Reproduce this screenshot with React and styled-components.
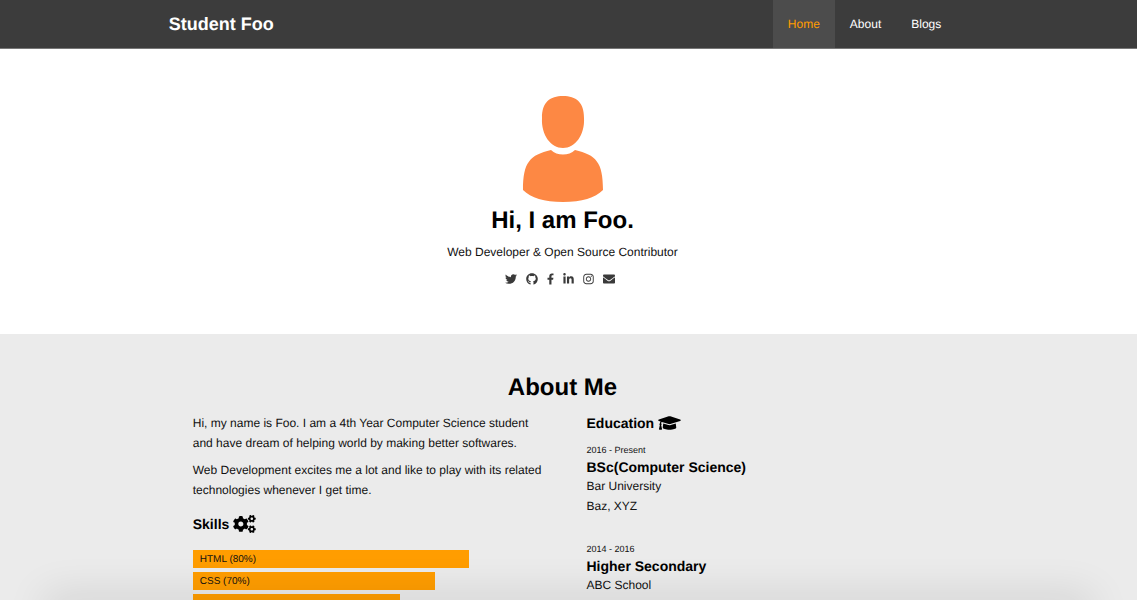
import React from "react";
import styled, { createGlobalStyle } from "styled-components";
import {
  FaTwitter,
  FaGithub,
  FaFacebookF,
  FaLinkedinIn,
  FaInstagram,
  FaEnvelope,
  FaCogs,
  FaGraduationCap,
} from "react-icons/fa";

const GlobalStyle = createGlobalStyle`
  *, *::before, *::after { box-sizing: border-box; }
  html { scrollbar-width: none; }
  body {
    margin: 0;
    background: #ebebeb;
    color: #111;
    font-family: Helvetica, "Liberation Sans", Arial, sans-serif;
    font-size: 12px;
    line-height: 20px;
    text-rendering: geometricPrecision;
  }
  h1, h2, h3, h4, p, ul { margin: 0; padding: 0; }
  ul { list-style: none; }
  a { color: inherit; text-decoration: none; }
`;

const Band = styled.div`
  padding-right: 12px;
  background: ${({ $background }) => $background};
`;

const Container = styled.div`
  width: 70%;
  margin: 0 auto;
`;

const Navbar = styled(Container)`
  display: flex;
  align-items: stretch;
  justify-content: space-between;
  height: 48px;
`;

const Header = styled(Band).attrs({ as: "header" })`
  border-bottom: 1px solid #777;
`;

const Brand = styled.a`
  && { color: #fff; }
  font-size: 18px;
  font-weight: bold;
  line-height: 48px;
`;

const NavList = styled.ul`
  display: flex;
`;

const NavLink = styled.a`
  display: block;
  padding: 0 15px;
  line-height: 48px;
  && { color: ${({ $active }) => ($active ? "#ff9d00" : "#fff")}; }
  background: ${({ $active }) => ($active ? "#4c4c4c" : "transparent")};
`;

const Hero = styled(Container)`
  display: flex;
  flex-direction: column;
  align-items: center;
  padding: 46px 0;
  text-align: center;
`;

const Avatar = styled.svg`
  display: block;
  width: 82px;
  height: 108px;
  margin-bottom: 2px;
  fill: #fd8844;
`;

const Title = styled.h1`
  color: #000;
  font-size: 24px;
  line-height: 32px;
`;

const Tagline = styled.p`
  margin-top: 5px;
`;

const SocialList = styled.ul`
  display: flex;
  justify-content: center;
  gap: 9px;
  margin: 11px 5px 0 0;
`;

const SocialLink = styled.a`
  display: block;
  height: 15px;
  && { color: #3a3a3a; }

  svg {
    display: block;
    width: ${({ $width }) => $width}px;
    height: 12px;
  }
`;

const About = styled(Container)`
  padding: 38px 0 48px;
`;

const AboutTitle = styled(Title).attrs({ as: "h2" })`
  text-align: center;
`;

const Columns = styled.div`
  display: grid;
  grid-template-columns: 1fr 1fr;
  margin-top: 9px;
`;

const Column = styled.div`
  padding: 0 16px 0 24px;
`;

const Paragraph = styled.p`
  margin-bottom: 7px;
`;

const Heading = styled.h3`
  display: flex;
  align-items: center;
  gap: 4px;
  color: #000;
  font-size: 14px;
  line-height: 20px;
  margin-top: ${({ $spaced }) => ($spaced ? "14px" : "0")};

  svg {
    width: 23px;
    height: 18px;
  }
`;

const SkillList = styled.ul`
  display: grid;
  gap: 4px;
  margin: 16px 8px 0 0;
`;

const Skill = styled.li`
  width: ${({ $level }) => $level}%;
  height: 18px;
  padding: 0 7px;
  background: #ff9d00;
  font-size: 10px;
  line-height: 20px;
`;

const School = styled.article`
  margin-top: ${({ $first }) => ($first ? "10px" : "26px")};
`;

const Period = styled.p`
  font-size: 9px;
  line-height: 15px;
`;

const Degree = styled.h4`
  color: #000;
  font-size: 14px;
  line-height: 18px;
`;

const BottomShade = styled.div`
  position: fixed;
  right: 50px;
  bottom: -20px;
  left: 50px;
  height: 20px;
  box-shadow: 0 0 40px 6px rgba(0, 0, 0, 0.11);
  pointer-events: none;
`;

const navItems = ["Home", "About", "Blogs"];

const socials = [
  { name: "Twitter", Icon: FaTwitter, width: 12 },
  { name: "GitHub", Icon: FaGithub, width: 12 },
  { name: "Facebook", Icon: FaFacebookF, width: 7 },
  { name: "LinkedIn", Icon: FaLinkedinIn, width: 11 },
  { name: "Instagram", Icon: FaInstagram, width: 11 },
  { name: "Email", Icon: FaEnvelope, width: 12 },
];

const skills = [
  { label: "HTML (80%)", level: 80 },
  { label: "CSS (70%)", level: 70 },
  { label: "", level: 60 },
];

const schools = [
  {
    period: "2016 - Present",
    degree: "BSc(Computer Science)",
    lines: ["Bar University", "Baz, XYZ"],
  },
  {
    period: "2014 - 2016",
    degree: "Higher Secondary",
    lines: ["ABC School"],
  },
];

export default function App() {
  return (
    <>
      <GlobalStyle />
      <Header $background="#3c3c3c">
        <Navbar>
          <Brand href="#home">Student Foo</Brand>
          <nav>
            <NavList>
              {navItems.map((item, i) => (
                <li key={item}>
                  <NavLink href={`#${item.toLowerCase()}`} $active={i === 0}>
                    {item}
                  </NavLink>
                </li>
              ))}
            </NavList>
          </nav>
        </Navbar>
      </Header>
      <main>
        <Band $background="#fff" id="home">
          <Hero>
            <Avatar viewBox="0 0 82 108" aria-hidden="true">
              <path d="M41 1C54 1 62 7 62 23C63 40 53 53 41 53C29 53 19 40 20 23C20 7 28 1 41 1Z" />
              <path d="M29 55C35 61 47 61 53 55C74 60 81 67 81 95C73 103 60 107 41 107C22 107 9 103 1 95C1 67 8 60 29 55Z" />
            </Avatar>
            <Title>Hi, I am Foo.</Title>
            <Tagline>Web Developer &amp; Open Source Contributor</Tagline>
            <SocialList>
              {socials.map(({ name, Icon, width }) => (
                <li key={name}>
                  <SocialLink
                    href={`#${name.toLowerCase()}`}
                    aria-label={name}
                    $width={width}
                  >
                    <Icon />
                  </SocialLink>
                </li>
              ))}
            </SocialList>
          </Hero>
        </Band>
        <Band $background="#ebebeb" id="about">
          <About>
            <AboutTitle>About Me</AboutTitle>
            <Columns>
              <Column>
                <Paragraph>
                  Hi, my name is Foo. I am a 4th Year Computer Science student
                  and have dream of helping world by making better softwares.
                </Paragraph>
                <Paragraph>
                  Web Development excites me a lot and like to play with its
                  related technologies whenever I get time.
                </Paragraph>
                <Heading $spaced>
                  Skills <FaCogs />
                </Heading>
                <SkillList>
                  {skills.map(({ label, level }) => (
                    <Skill key={level} $level={level}>
                      {label}
                    </Skill>
                  ))}
                </SkillList>
              </Column>
              <Column>
                <Heading>
                  Education <FaGraduationCap />
                </Heading>
                {schools.map(({ period, degree, lines }, i) => (
                  <School key={period} $first={i === 0}>
                    <Period>{period}</Period>
                    <Degree>{degree}</Degree>
                    {lines.map((line) => (
                      <p key={line}>{line}</p>
                    ))}
                  </School>
                ))}
              </Column>
            </Columns>
          </About>
        </Band>
      </main>
      <BottomShade />
    </>
  );
}
